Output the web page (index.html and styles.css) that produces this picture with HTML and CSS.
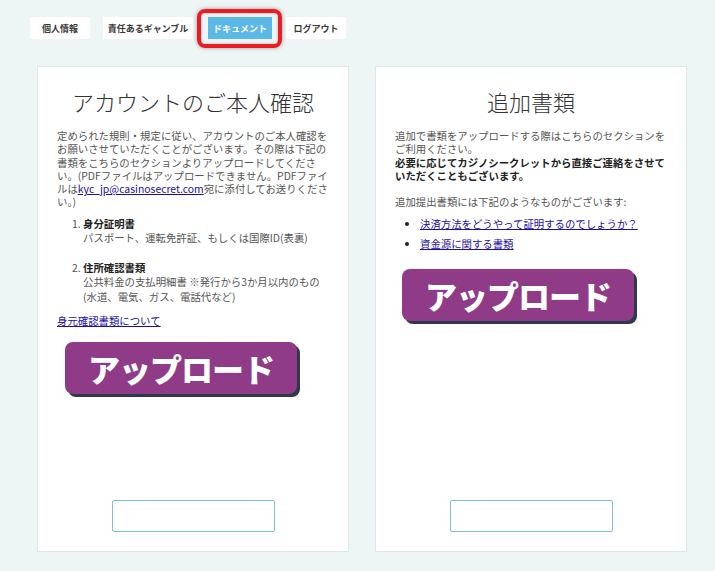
FILE: index.html
```html
<!DOCTYPE html>
<html lang="ja">
<head>
<meta charset="utf-8">
<link rel="stylesheet" href="styles.css">
</head>
<body>
<nav class="tabs">
  <a class="tab">個人情報</a>
  <a class="tab">責任あるギャンブル</a>
  <a class="tab tab-active">ドキュメント<span class="highlight"></span></a>
  <a class="tab">ログアウト</a>
</nav>
<main class="cards">
  <section class="card">
    <h2 class="card-title">アカウントのご本人確認</h2>
    <p class="text">定められた規則・規定に従い、アカウントのご本人確認をお願いさせていただくことがございます。その際は下記の書類をこちらのセクションよりアップロードしてください。(PDFファイルはアップロードできません。PDFファイルは<a class="link" href="#">kyc_jp@casinosecret.com</a>宛に添付してお送りください。)</p>
    <ol class="doc-list">
      <li><b>身分証明書</b><br>パスポート、運転免許証、もしくは国際ID(表裏)</li>
      <li><b>住所確認書類</b><br>公共料金の支払明細書 ※発行から3か月以内のもの(水道、電気、ガス、電話代など)</li>
    </ol>
    <p class="text about"><a class="link" href="#">身元確認書類について</a></p>
    <button class="upload">アップロード</button>
    <div class="file-box"></div>
  </section>
  <section class="card">
    <h2 class="card-title">追加書類</h2>
    <p class="text">追加で書類をアップロードする際はこちらのセクションをご利用ください。<br><b class="strong">必要に応じてカジノシークレットから直接ご連絡をさせていただくこともございます。</b></p>
    <p class="text">追加提出書類には下記のようなものがございます:</p>
    <ul class="link-list">
      <li><a class="link" href="#">決済方法をどうやって証明するのでしょうか？</a></li>
      <li><a class="link" href="#">資金源に関する書類</a></li>
    </ul>
    <button class="upload upload-right">アップロード</button>
    <div class="file-box"></div>
  </section>
</main>
</body>
</html>
```
FILE: styles.css
```css
* { box-sizing: border-box; }
html, body { margin: 0; padding: 0; }
body {
  background: #edf5f5;
  font-family: "Noto Sans CJK JP", "Noto Sans", sans-serif;
  color: #555;
  width: 715px;
  height: 571px;
  overflow: hidden;
}
.tabs {
  display: flex;
  align-items: center;
  padding: 17px 0 0 30px;
  box-sizing: content-box;
  height: 22px;
}
.tab {
  position: relative;
  display: flex;
  align-items: center;
  justify-content: center;
  height: 22px;
  background: #fff;
  font-size: 9px;
  font-weight: bold;
  color: #3a3a3a;
  margin-right: 13px;
}
.tab:nth-child(1) { width: 60px; }
.tab:nth-child(2) { width: 90px; margin-right: 15px; }
.tab:nth-child(3) { width: 64px; margin-right: 14px; }
.tab:nth-child(4) { width: 60px; }
.tab-active {
  background: #5cb9e7;
  color: #fff;
}
.highlight {
  position: absolute;
  left: -11px;
  top: -8px;
  width: 85px;
  height: 39px;
  border: 4px solid #ec1c24;
  border-radius: 8px;
  box-shadow: 0 0 4px rgba(0,0,0,0.35), inset 0 0 3px rgba(0,0,0,0.3);
}
.cards {
  display: flex;
  gap: 26px;
  padding: 27px 0 0 37px;
}
.card {
  width: 312px;
  height: 486px;
  background: #fff;
  border: 1px solid #dce9e9;
  padding: 17px 19px 19px 19px;
  display: flex;
  flex-direction: column;
  align-items: flex-start;
}
.card-title {
  align-self: stretch;
  text-align: center;
  font-size: 22px;
  font-weight: 300;
  color: #333;
  margin: 0 0 11px;
  line-height: 34px;
}
.text {
  font-size: 10.4px;
  line-height: 13.3px;
  margin: 0 0 13px;
  color: #555;
}
.strong { color: #222; }
.link { color: #1a0dab; text-decoration: underline; }
.doc-list {
  margin: -5px 0 0;
  padding-left: 26px;
  font-size: 10.4px;
  line-height: 14.5px;
  color: #555;
}
.doc-list li { margin-bottom: 15px; }
.doc-list li:last-child { margin-bottom: 0; }
.doc-list b { color: #222; }
.about { margin: 10px 0 0; }
.link-list {
  margin: -4px 0 0;
  padding-left: 25px;
  font-size: 10.4px;
  line-height: 14px;
  color: #222;
}
.link-list li { margin-bottom: 6px; }
.link-list li:last-child { margin-bottom: 0; }
.upload {
  margin: 14px 0 0 8px;
  width: 232px;
  height: 52px;
  border: none;
  border-radius: 8px;
  background: #8f3b88;
  color: #fff;
  font-family: "Noto Sans CJK JP", sans-serif;
  font-weight: 900;
  font-size: 32px;
  letter-spacing: -1px;
  box-shadow: 3px 3px 0 #2e3a4b;
  padding: 0;
}
.upload-right { margin-top: 18px; margin-left: 7px; }
.file-box {
  margin-top: auto;
  align-self: center;
  width: 163px;
  height: 32px;
  border: 1px solid #79bfdf;
  border-radius: 2px;
}
```
